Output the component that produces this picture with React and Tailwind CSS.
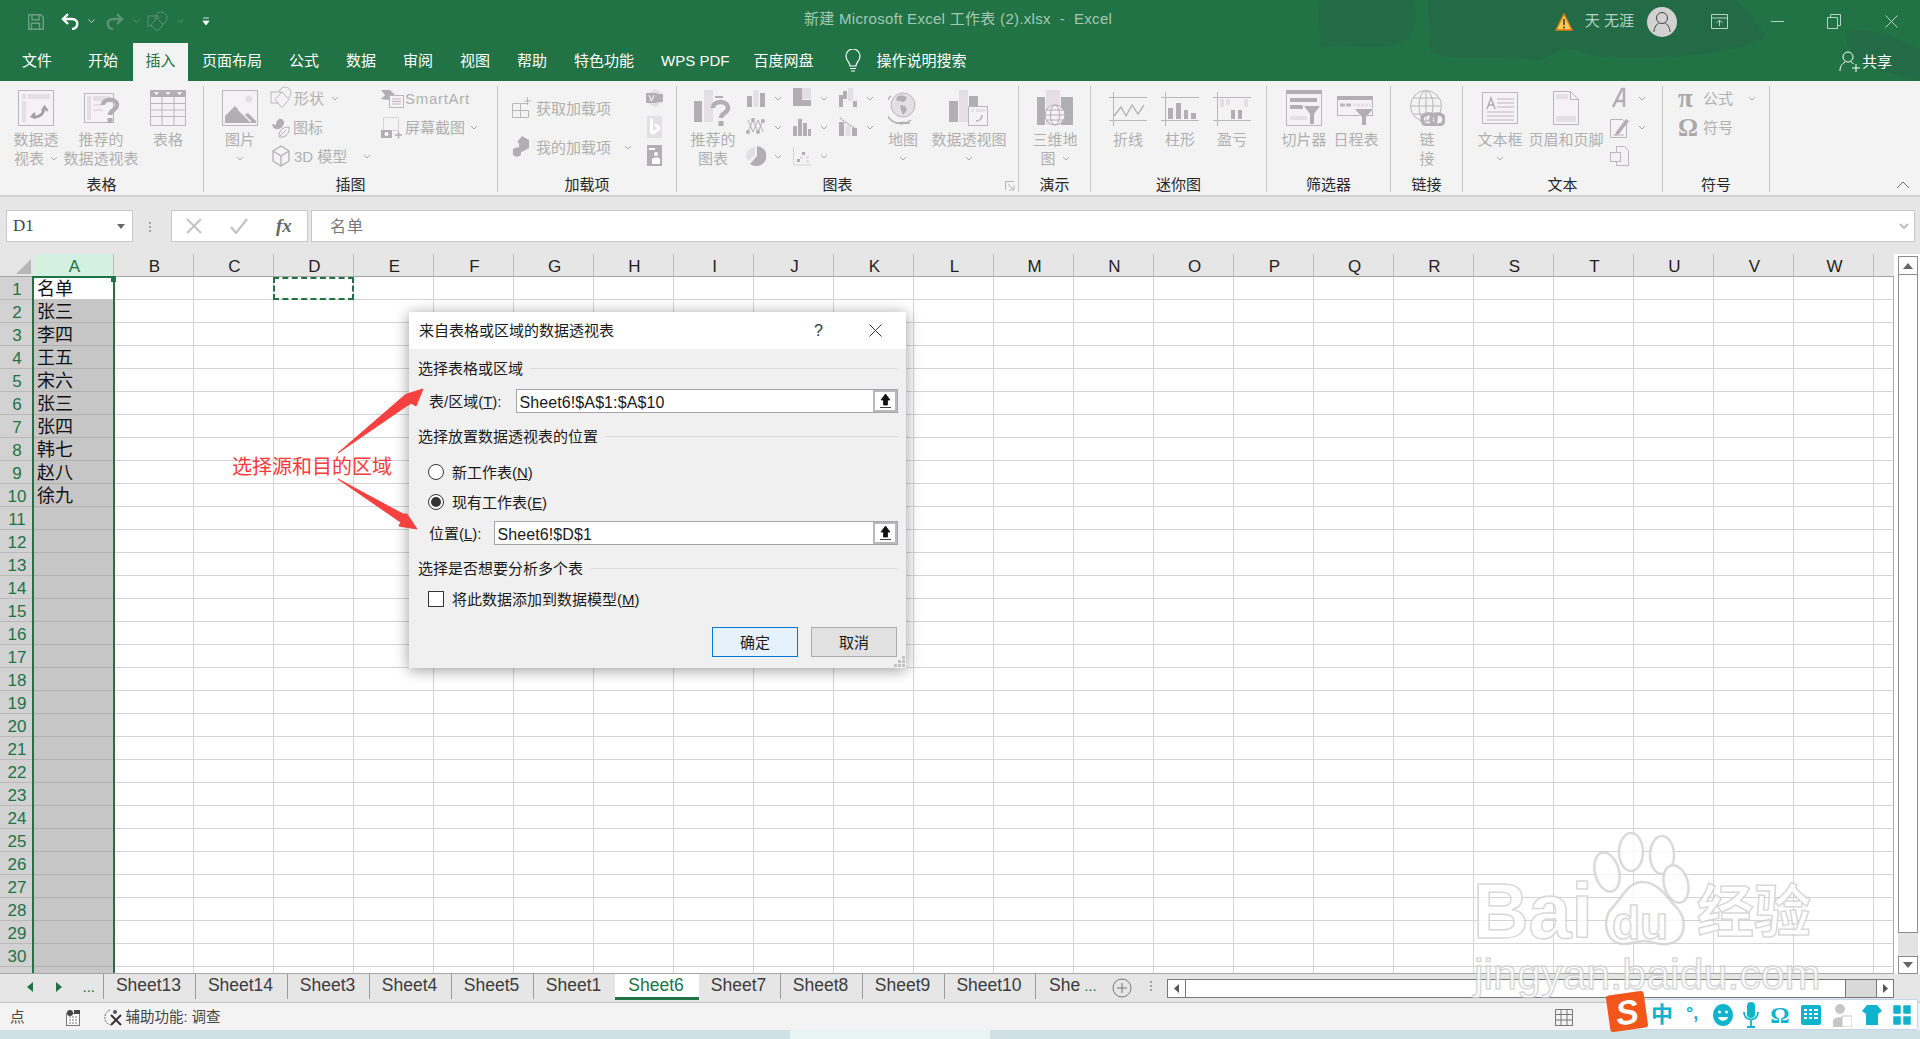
import React from "react";

const LETTERS = "ABCDEFGHIJKLMNOPQRSTUVW".split("");
const NAMES = ["名单", "张三", "李四", "王五", "宋六", "张三", "张四", "韩七", "赵八", "徐九"];
const ROWS = Array.from({ length: 31 }, (_, i) => i + 1);
const GRID = "grid grid-cols-[34px_repeat(23,80px)_20px]";

const D = "#b2afb2";
const L = "#e3dfe3";
const F = "#f5f2f5";
const S = "#bab7ba";

function Chev({ className = "" }) {
  return (
    <svg width="8" height="5" viewBox="0 0 8 5" className={"shrink-0 " + className}>
      <path d="M1 1l3 3 3-3" fill="none" stroke="#aaa" strokeWidth="1" />
    </svg>
  );
}

function Ico({ w = 36, h = 36, children }) {
  return (
    <svg width={w} height={h} viewBox={`0 0 ${w} ${h}`} className="shrink-0">
      {children}
    </svg>
  );
}

const Pivot = () => (
  <Ico>
    <rect x=".5" y=".5" width="35" height="35" fill={F} stroke={S} />
    <rect x="4" y="4" width="4" height="5" fill={L} />
    <rect x="10" y="4" width="22" height="5" fill={L} />
    <rect x="4" y="11" width="4" height="21" fill={L} />
    <path d="M14 26c5 2 10 0 12-6M24 21l2.500-4 3 4M17 23l-3 3.500 4 1.500" fill="none" stroke="#a3a0a3" strokeWidth="2.500" />
  </Ico>
);
const Recommend = () => (
  <Ico>
    <rect x="1.500" y="3.500" width="29" height="29" fill={F} stroke={S} />
    <rect x="4" y="6" width="4" height="24" fill={L} />
    <rect x="10" y="6" width="17" height="5" fill={L} />
    <rect x="10" y="14" width="10" height="2" fill={L} />
    <rect x="10" y="19" width="10" height="2" fill={L} />
    <path d="M20 15c0-7 14-7 14 0 0 5-7 5-7 10" fill="none" stroke={D} strokeWidth="4.500" />
    <rect x="24.500" y="28" width="5" height="5" fill={D} />
  </Ico>
);
const Table = () => (
  <Ico>
    <rect x=".5" y=".5" width="35" height="35" fill={F} stroke={S} />
    <rect x="0" y="0" width="36" height="7" fill={D} />
    <path d="M4 2h5l-2.500 3zM15.500 2h5L18 5zM27 2h5l-2.500 3z" fill="#fff" />
    <path d="M0 13.500h36M0 20h36M0 26.500h36M12 7v29M24 7v29" stroke={S} />
  </Ico>
);
const Picture = () => (
  <Ico>
    <rect x=".5" y=".5" width="35" height="35" fill={F} stroke={S} />
    <circle cx="27" cy="9" r="3.500" fill={L} />
    <path d="M3 33V26l10-10 9 9 4-2 8 8v2z" fill={D} />
    <path d="M16 19l13 13" stroke={F} strokeWidth="1.500" />
  </Ico>
);
const Shapes = () => (
  <Ico w={22} h={24}>
    <circle cx="15" cy="7" r="6" fill="none" stroke={S} />
    <rect x="1" y="6" width="11" height="11" fill={F} stroke={S} />
    <path d="M12 6l7 7.500-7 8-7-8z" fill={F} stroke={S} />
  </Ico>
);
const Bird = () => (
  <Ico w={22} h={24}>
    <path d="M2 9l4 1c0-5 4-8 7-5 2 2 1 5-1 7-3 3-7 3-9 0z" fill={D} />
    <path d="M9 22c0-6 3-10 10-10 1 6-3 11-10 10z" fill={F} stroke={D} />
    <path d="M10 21l6-6" stroke={D} />
  </Ico>
);
const Cube = () => (
  <Ico w={22} h={24}>
    <path d="M11 2l8 5v10l-8 5-8-5V7zM3 7l8 5 8-5M11 12v10" fill="none" stroke={D} strokeWidth="1.300" />
  </Ico>
);
const SmartArt = () => (
  <Ico w={24} h={24}>
    <path d="M0 4h9l5 5-6 5L0 13l4-4z" fill={D} />
    <rect x="8.500" y="9.500" width="14" height="12" fill={F} stroke={S} />
    <path d="M11 13h9M11 15.500h9M11 18h9" stroke={S} />
  </Ico>
);
const Shot = () => (
  <Ico w={24} h={24}>
    <rect x="2.500" y="2.500" width="15" height="13" fill="none" stroke={S} strokeDasharray="1 1" />
    <rect x="0" y="15" width="11" height="8" fill={D} />
    <circle cx="5.500" cy="19" r="2" fill="#fff" />
    <path d="M14 20h7M17.500 16.500v7" stroke={D} strokeWidth="1.500" />
  </Ico>
);
const GetAddin = () => (
  <Ico w={20} h={24}>
    <path d="M.5 7.500h8v7h-8zM.5 14.500h8v7h-8zM8.500 14.500h8v7h-8zM8.500 7.500h8" fill="none" stroke={S} />
    <path d="M12 5h7M15.500 1v8" stroke={S} />
  </Ico>
);
const MyAddin = () => (
  <Ico w={20} h={24}>
    <path d="M10 1l7 4v8l-7 4-3-2V8L5 7z" fill={D} />
    <path d="M5 12l4 2v6l-4 2-4-2v-6z" fill={D} />
  </Ico>
);
const Visio = () => (
  <Ico w={18} h={20}>
    <path d="M9 1l7 4v10l-7 4-7-4V5z" fill={L} />
    <rect x="0" y="5" width="11" height="10" fill={D} />
    <rect x="11" y="6" width="6" height="8" fill={D} />
    <path d="M3 7l2.500 6L8 7" fill="none" stroke="#fff" />
  </Ico>
);
const Bing = () => (
  <Ico w={18} h={22}>
    <rect x="1" y="0" width="15" height="22" fill={L} />
    <path d="M4 2l3 1v12l5-3-3-1-1-4 6 3v4l-7 5-3-2z" fill="#fff" />
  </Ico>
);
const People = () => (
  <Ico w={18} h={22}>
    <rect x="1" y="0" width="15" height="21" fill={D} />
    <rect x="3" y="3" width="6" height="2" fill="#fff" />
    <circle cx="10" cy="9" r="2" fill="#fff" />
    <path d="M6 19v-5c0-2 8-2 8 0v5z" fill="#fff" />
  </Ico>
);
const RecChart = () => (
  <Ico w={38} h={36}>
    <rect x="0" y="11" width="8" height="21" fill={D} />
    <rect x="10" y="0" width="9" height="32" fill={L} />
    <rect x="21" y="6" width="8" height="2" fill={D} />
    <path d="M19 18c0-8 15-8 15 0 0 5-7 5-7 10" fill="none" stroke={D} strokeWidth="4.500" />
    <rect x="24.500" y="31" width="5" height="5" fill={D} />
  </Ico>
);
const Bars = () => (
  <Ico w={20} h={22}>
    <rect x="1" y="9" width="5" height="11" fill={D} />
    <rect x="7.500" y="3" width="5" height="17" fill={L} />
    <rect x="14" y="6" width="5" height="14" fill={D} />
  </Ico>
);
const Tree = () => (
  <Ico w={20} h={22}>
    <rect x="1" y="1" width="9" height="18" fill={D} />
    <rect x="10" y="1" width="9" height="11" fill={L} />
    <rect x="10" y="13" width="9" height="6" fill={D} />
  </Ico>
);
const Water = () => (
  <Ico w={20} h={22}>
    <path d="M1 8h4v12H1z" fill={D} />
    <path d="M5 4h4v8H5z" fill={D} />
    <path d="M10 1h5v13h-5z" fill={L} />
    <path d="M15 14h4v6h-4z" fill={D} />
  </Ico>
);
const Stat = () => (
  <Ico w={22} h={22}>
    <path d="M3 4l5 12 5-12 5 12M3 16L8 4l5 12 5-12" fill="none" stroke={D} />
    <circle cx="3" cy="16" r="2" fill={D} />
    <circle cx="8" cy="4" r="2" fill={D} />
    <circle cx="13" cy="16" r="2" fill={D} />
    <circle cx="18" cy="5" r="2" fill={D} />
  </Ico>
);
const Histo = () => (
  <Ico w={20} h={22}>
    <rect x="1" y="10" width="4" height="10" fill={D} />
    <rect x="6" y="3" width="4" height="17" fill={D} />
    <rect x="11" y="7" width="4" height="13" fill={D} />
    <rect x="16" y="13" width="3" height="7" fill={D} />
  </Ico>
);
const Combo = () => (
  <Ico w={20} h={22}>
    <rect x="1" y="6" width="5" height="14" fill={D} />
    <rect x="7.500" y="10" width="5" height="10" fill={L} />
    <rect x="14" y="12" width="5" height="8" fill={D} />
    <path d="M2 2l8 6 8 5" fill="none" stroke={D} strokeDasharray="2 1" strokeWidth="1.500" />
  </Ico>
);
const Pie = () => (
  <Ico w={20} h={22}>
    <path d="M9 2a9 9 0 0 0-7 14l7-6z" fill={L} />
    <path d="M11 1a10 10 0 0 1-1 20 10 10 0 0 1-6-2l7-8z" fill={D} />
  </Ico>
);
const Scatter = () => (
  <Ico w={20} h={22}>
    <path d="M1.500 2v18h17" fill="none" stroke={S} strokeDasharray="1 1" />
    <rect x="5" y="14" width="3" height="3" fill={D} />
    <rect x="10" y="7" width="3" height="3" fill={D} />
    <rect x="14" y="11" width="3" height="3" fill={L} />
    <rect x="14" y="15" width="3" height="3" fill={L} />
    <rect x="8" y="11" width="3" height="3" fill={L} />
  </Ico>
);
const Globe = () => (
  <Ico w={30} h={36}>
    <path d="M3 6a15 15 0 0 0 20 24" fill="none" stroke={D} strokeWidth="1.500" />
    <circle cx="15" cy="15" r="12" fill={L} stroke={S} />
    <path d="M9 7c3-2 8-2 10 1l-3 4-5-1-3-1zM12 15l5 1 2 4-4 5-2-5z" fill={D} />
    <path d="M8 34c0-3 14-3 14 0z" fill={D} />
  </Ico>
);
const PivotChart = () => (
  <Ico w={40} h={36}>
    <rect x="0" y="11" width="9" height="21" fill={D} />
    <rect x="10" y="0" width="9" height="32" fill={L} />
    <rect x="20" y="6" width="9" height="14" fill={D} />
    <rect x="19.500" y="16.500" width="19" height="19" fill={F} stroke={S} />
    <rect x="22" y="19" width="3" height="3" fill={L} />
    <rect x="27" y="19" width="9" height="3" fill={L} />
    <path d="M27 31c3 0 6-2 6-6" fill="none" stroke={D} strokeWidth="1.500" />
  </Ico>
);
const Map3d = () => (
  <Ico>
    <rect x="0" y="7" width="8" height="28" fill={D} />
    <rect x="9" y="0" width="5" height="35" fill={L} />
    <rect x="14" y="0" width="9" height="35" fill={L} />
    <rect x="24" y="7" width="12" height="28" fill={D} />
    <circle cx="18" cy="25" r="10" fill={F} stroke={D} />
    <ellipse cx="18" cy="25" rx="4.500" ry="10" fill="none" stroke={D} />
    <path d="M8 25h20M9.500 20h17M9.500 30h17" stroke={D} />
  </Ico>
);
const Spark = ({ children }) => (
  <Ico w={38} h={34}>
    <path d="M0 5.500h38M0 28.500h38M4.500 0v34" stroke={S} />
    {children}
  </Ico>
);
const Slicer = () => (
  <Ico>
    <rect x=".5" y=".5" width="35" height="35" fill={F} stroke={S} />
    <rect x="0" y="0" width="36" height="4" fill={D} />
    <rect x="4" y="8" width="27" height="4" fill={D} />
    <rect x="4" y="15" width="13" height="4" fill={D} />
    <rect x="4" y="26" width="17" height="4" fill={L} />
    <path d="M16 15h19l-7 9v11h-5V24z" fill={F} />
    <path d="M18 16h16l-6 8v10h-4V24z" fill={D} />
  </Ico>
);
const Timeline = () => (
  <Ico w={38} h={36}>
    <rect x=".5" y="6.500" width="35" height="19" fill={F} stroke={S} />
    <rect x="0" y="6" width="36" height="4" fill={D} />
    <path d="M3 15h5M9 15h5" stroke={S} strokeWidth="3" />
    <path d="M16 15h18" stroke={L} strokeWidth="3" strokeDasharray="3 1" />
    <path d="M16 18h21l-8 9v9h-5v-9z" fill={F} />
    <path d="M18 19h18l-7 8v8h-4v-8z" fill={D} />
  </Ico>
);
const Link = () => (
  <Ico>
    <circle cx="17" cy="16" r="15.500" fill="none" stroke={S} />
    <ellipse cx="17" cy="16" rx="7" ry="15.500" fill="none" stroke={S} />
    <path d="M1 16h32M4 8h26M4 24h26M17 0v32" stroke={S} />
    <rect x="13" y="24" width="14" height="11" rx="5.500" fill="none" stroke={D} strokeWidth="3.500" />
    <rect x="22" y="24" width="13" height="11" rx="5.500" fill="none" stroke={D} strokeWidth="3.500" />
  </Ico>
);
const TextBox = () => (
  <Ico>
    <rect x=".5" y="2.500" width="35" height="31" fill={F} stroke={S} />
    <path d="M5 19l4-11 4 11M6.500 15h5" fill="none" stroke={D} strokeWidth="1.500" />
    <path d="M15 9h17M15 13h17M15 17h17M5 22h27M5 26h27M5 30h27" stroke={S} />
  </Ico>
);
const HeadFoot = () => (
  <Ico w={26} h={36}>
    <path d="M.5 1.500h17l8 8v25H.5z" fill={F} stroke={S} />
    <path d="M17.500 1.500v8h8" fill="none" stroke={S} />
    <rect x="3" y="4" width="12" height="5" fill={L} />
    <rect x="3" y="26" width="20" height="6" fill={L} />
  </Ico>
);
const WordArt = () => (
  <Ico w={20} h={22}>
    <path d="M3 20L12 2h2v18M5 14h9" fill="none" stroke={D} strokeWidth="2.500" />
  </Ico>
);
const SignLine = () => (
  <Ico w={20} h={22}>
    <path d="M.5 3.500h12l4 4v14H.5z" fill={F} stroke={S} />
    <path d="M6 16L16 3l3 2L9 18l-4 2z" fill={D} />
    <path d="M3 19h11" stroke={S} />
  </Ico>
);
const ObjectIco = () => (
  <Ico w={20} h={22}>
    <path d="M6.500 1.500h8l4 4v15h-12z" fill={F} stroke={S} />
    <rect x=".5" y="7.500" width="10" height="9" fill={F} stroke={S} />
  </Ico>
);

function Group({ label, className, labelClass = "", children, extra }) {
  return (
    <div className={"relative flex h-[106px] shrink-0 flex-col border-r border-[#c6c6c6] " + className}>
      <div className="flex h-[93px] items-start whitespace-nowrap text-[#b0b0b0]">{children}</div>
      <div className={"flex flex-1 items-center justify-center text-[15px] leading-none text-[#262626] " + labelClass}>{label}</div>
      {extra}
    </div>
  );
}

function Big({ className = "", icon, lines, drop }) {
  return (
    <div className={"flex shrink-0 flex-col items-center text-[15px] leading-[19px] " + className}>
      <div className="mt-[4px] flex h-[36px] items-end justify-center">{icon}</div>
      <div className="mt-[4px] flex flex-col items-center">
        {lines.map((l, i) => (
          <div key={i} className="flex h-[19px] items-center gap-[6px]">
            {l}
            {drop && i === lines.length - 1 && <Chev />}
          </div>
        ))}
      </div>
    </div>
  );
}

function BigDropBelow({ className = "", icon, lines }) {
  return (
    <div className={"flex shrink-0 flex-col items-center text-[15px] leading-[19px] " + className}>
      <div className="mt-[4px] flex h-[36px] items-end justify-center">{icon}</div>
      <div className="mt-[4px] flex flex-col items-center">
        {lines.map((l) => (
          <div key={l} className="flex h-[19px] items-center">
            {l}
          </div>
        ))}
        <div className="flex h-[19px] items-center">
          <Chev />
        </div>
      </div>
    </div>
  );
}

function Small({ icon, text, gap = "gap-[2px]", chev, className = "" }) {
  return (
    <div className={"flex h-[24px] items-center text-[15px] leading-none " + gap + " " + className}>
      {icon}
      {text && <span>{text}</span>}
      {chev}
    </div>
  );
}

function ChartCol({ items }) {
  return (
    <div className="flex w-[46px] shrink-0 flex-col gap-[5px]">
      {items.map((It, i) => (
        <div key={i} className="flex h-[24px] items-center gap-[8px]">
          <span className="flex w-[21px] justify-center">
            <It />
          </span>
          <Chev />
        </div>
      ))}
    </div>
  );
}

function Ribbon() {
  return (
    <div className="flex h-[116px] items-start border-b-2 border-[#d2d2d2] bg-[#f3f3f3] pt-[5px]">
      <Group label="表格" className="w-[204px]">
        <Big className="ml-[7px] w-[58px]" icon={<Pivot />} lines={["数据透", "视表"]} drop />
        <Big className="w-[72px]" icon={<Recommend />} lines={["推荐的", "数据透视表"]} />
        <Big className="w-[62px]" icon={<Table />} lines={["表格"]} />
      </Group>
      <Group label="插图" className="w-[294px]">
        <BigDropBelow className="ml-[14px] w-[44px]" icon={<Picture />} lines={["图片"]} />
        <div className="ml-[8px] flex w-[111px] shrink-0 flex-col gap-[5px]">
          <Small icon={<Shapes />} text="形状" chev={<Chev className="ml-[5px]" />} />
          <Small icon={<Bird />} text="图标" gap="gap-[1px]" />
          <Small icon={<Cube />} text="3D 模型" chev={<Chev className="ml-[14px]" />} />
        </div>
        <div className="flex flex-col gap-[5px]">
          <Small icon={<SmartArt />} text={<span className="tracking-[0.7px]">SmartArt</span>} gap="gap-0" />
          <Small icon={<Shot />} text="屏幕截图" gap="gap-0" chev={<Chev className="ml-[5px]" />} />
        </div>
      </Group>
      <Group label="加载项" className="w-[179px]">
        <div className="flex w-[148px] shrink-0 flex-col gap-[15px] pl-[14px] pt-[10px]">
          <Small icon={<GetAddin />} text="获取加载项" gap="gap-[4px]" />
          <Small icon={<MyAddin />} text="我的加载项" gap="gap-[4px]" chev={<Chev className="ml-[9px]" />} />
        </div>
        <div className="flex flex-col gap-[5px]">
          <Small icon={<Visio />} />
          <Small icon={<Bing />} />
          <Small icon={<People />} />
        </div>
      </Group>
      <Group
        label="图表"
        className="w-[342px]"
        labelClass="pr-[20px]"
        extra={
          <svg width="10" height="10" viewBox="0 0 10 10" className="absolute bottom-[1px] right-[3px]">
            <path d="M.5 9V.5H9M3 3l5.500 5.500M4.500 9H9V4.500" fill="none" stroke="#b5b5b5" />
          </svg>
        }
      >
        <Big className="ml-[11px] w-[50px]" icon={<RecChart />} lines={["推荐的", "图表"]} />
        <div className="ml-[7px]">
          <ChartCol items={[Bars, Stat, Pie]} />
        </div>
        <ChartCol items={[Tree, Histo, Scatter]} />
        <div className="flex w-[46px] shrink-0 flex-col gap-[5px]">
          {[Water, Combo].map((It, i) => (
            <div key={i} className="flex h-[24px] items-center gap-[8px]">
              <span className="flex w-[21px] justify-center">
                <It />
              </span>
              <Chev />
            </div>
          ))}
        </div>
        <BigDropBelow className="w-[40px]" icon={<Globe />} lines={["地图"]} />
        <BigDropBelow className="ml-[1px] w-[90px]" icon={<PivotChart />} lines={["数据透视图"]} />
      </Group>
      <Group label="演示" className="w-[72px]">
        <Big className="w-[72px]" icon={<Map3d />} lines={["三维地", "图"]} drop />
      </Group>
      <Group label="迷你图" className="w-[176px]">
        <Big
          className="ml-[11px] w-[52px]"
          icon={
            <Spark>
              <path d="M5 24l7-9 5 9 6-11 6 9 6-9" fill="none" stroke={D} strokeWidth="1.300" />
            </Spark>
          }
          lines={["折线"]}
        />
        <Big
          className="w-[52px]"
          icon={
            <Spark>
              <path d="M7 16h5v11H7zM15 11h5v16h-5zM23 18h4v9h-4zM30 21h5v6h-5z" fill={D} />
            </Spark>
          }
          lines={["柱形"]}
        />
        <Big
          className="w-[52px]"
          icon={
            <Spark>
              <path d="M7 7h4v8H7zM13 7h4v6h-4zM31 7h4v8h-4z" fill={L} />
              <path d="M18 18h4v9h-4zM25 18h4v9h-4z" fill={D} />
            </Spark>
          }
          lines={["盈亏"]}
        />
      </Group>
      <Group label="筛选器" className="w-[124px]">
        <Big className="ml-[11px] w-[52px]" icon={<Slicer />} lines={["切片器"]} />
        <Big className="w-[52px]" icon={<Timeline />} lines={["日程表"]} />
      </Group>
      <Group label="链接" className="w-[72px]">
        <Big className="w-[72px]" icon={<Link />} lines={["链", "接"]} />
      </Group>
      <Group label="文本" className="w-[200px]">
        <BigDropBelow className="ml-[7px] w-[60px]" icon={<TextBox />} lines={["文本框"]} />
        <Big className="w-[72px]" icon={<HeadFoot />} lines={["页眉和页脚"]} />
        <div className="ml-[8px] flex flex-col gap-[5px]">
          <Small icon={<WordArt />} chev={<Chev className="ml-[6px]" />} />
          <Small icon={<SignLine />} chev={<Chev className="ml-[6px]" />} />
          <Small icon={<ObjectIco />} />
        </div>
      </Group>
      <Group label="符号" className="w-[107px]">
        <div className="flex flex-col gap-[5px] pl-[15px]">
          <Small
            icon={<span className="w-[23px] font-['Liberation_Serif',serif] text-[27px] font-bold text-[#a9a9a9]">π</span>}
            text="公式"
            chev={<Chev className="ml-[13px]" />}
          />
          <Small
            icon={<span className="w-[23px] font-['Liberation_Serif',serif] text-[25px] font-bold text-[#a9a9a9]">Ω</span>}
            text="符号"
          />
        </div>
      </Group>
      <div className="flex h-[106px] flex-1 items-end justify-end pb-[3px] pr-[10px]">
        <svg width="14" height="8" viewBox="0 0 14 8">
          <path d="M1 7l6-6 6 6" fill="none" stroke="#666" />
        </svg>
      </div>
    </div>
  );
}

function TitleBar() {
  const tabs = ["页面布局", "公式", "数据", "审阅", "视图", "帮助", "特色功能"];
  return (
    <div className="relative h-[81px] overflow-hidden bg-[#217346]">
      <svg className="absolute left-0 top-0" width="1920" height="81" viewBox="0 0 1920 81">
        <path
          d="M1320 0c-5 20 2 35 0 48 20-8 60 7 85-8 13-10 13-30 7-40zM1428 0l2 50c10 12 50 5 110 10 20-10 30-15 50-5 60 7 150 0 176-20-21-25-26-35-36-35zM1850 30c20-2 50 8 70 20v31l-40-11c-30-10-40-30-30-40z"
          fill="#236a47"
        />
      </svg>
      <div className="relative flex h-[43px] items-center">
        <div className="flex items-center">
          <svg width="16" height="16" viewBox="0 0 16 16" className="ml-[28px]">
            <path d="M.7.7h12l2.600 2.600v12H.7zM4 .7v5h7v-5M3.500 15.300v-6h8v6" fill="none" stroke="#6f9e84" strokeWidth="1.400" />
          </svg>
          <svg width="19" height="17" viewBox="0 0 19 17" className="ml-[17px]">
            <path d="M7 1L2 6l5 5M2 6h9c7 0 7 9 0 10" fill="none" stroke="#fff" strokeWidth="2.400" />
          </svg>
          <Caret className="ml-[8px]" color="#bcd5c7" />
          <svg width="19" height="17" viewBox="0 0 19 17" className="ml-[10px]">
            <path d="M12 1l5 5-5 5M17 6H8c-7 0-7 9 0 10" fill="none" stroke="#5d9274" strokeWidth="2.400" />
          </svg>
          <Caret className="ml-[9px]" color="#5d9274" />
          <svg width="21" height="21" viewBox="0 0 21 21" className="ml-[7px]">
            <circle cx="14" cy="7" r="6" fill="none" stroke="#5d9274" />
            <rect x="1" y="5" width="10" height="10" fill="none" stroke="#5d9274" />
            <path d="M10 7l6 7-6 6-6-6z" fill="#217346" stroke="#5d9274" />
          </svg>
          <Caret className="ml-[9px]" color="#5d9274" />
          <svg width="8" height="9" viewBox="0 0 8 9" className="ml-[18px]">
            <path d="M1 1h6M1 4h6L4 8z" fill="#fff" stroke="#fff" strokeWidth=".8" />
          </svg>
        </div>
        <div className="absolute left-[804px] top-[9px] whitespace-pre text-[15px] leading-[20px] tracking-[0.3px] text-[#a5c9b4]">
          新建 Microsoft Excel 工作表 (2).xlsx  -  Excel
        </div>
        <div className="ml-auto flex items-center">
          <svg width="18" height="18" viewBox="0 0 18 18">
            <path d="M9 1l8 16H1z" fill="#f5c95a" stroke="#e07a12" strokeWidth="1.400" />
            <path d="M9 6v6M9 13.500v2" stroke="#333" strokeWidth="1.500" />
          </svg>
          <span className="ml-[12px] whitespace-pre text-[15px] text-[#b7d4c3]">天 无涯</span>
          <div className="ml-[13px] flex h-[30px] w-[30px] items-center justify-center rounded-full bg-[#d2d2d2]">
            <svg width="18" height="22" viewBox="0 0 18 22">
              <circle cx="9" cy="7" r="5.500" fill="none" stroke="#444" />
              <path d="M1 21c0-5 3-8 5-9M17 21c0-5-3-8-5-9" fill="none" stroke="#444" />
            </svg>
          </div>
          <svg width="17" height="15" viewBox="0 0 17 15" className="ml-[34px]">
            <path d="M.5.5h16v14H.5zM.5 4h16M8.500 12V6M5.500 9l3-3 3 3" fill="none" stroke="#b7d4c3" />
          </svg>
          <svg width="13" height="1" viewBox="0 0 13 1" className="ml-[43px]">
            <path d="M0 .5h13" stroke="#b7d4c3" />
          </svg>
          <svg width="14" height="15" viewBox="0 0 14 15" className="ml-[43px]">
            <path d="M.5 3.500h10v11H.5zM3.500 3.500v-3h10v11h-3" fill="none" stroke="#b7d4c3" />
          </svg>
          <svg width="13" height="13" viewBox="0 0 13 13" className="ml-[44px] mr-[22px]">
            <path d="M.5.5l12 12M12.500.5l-12 12" stroke="#b7d4c3" />
          </svg>
        </div>
      </div>
      <div className="relative flex h-[38px] items-stretch text-[15px] leading-none text-white">
        <div className="ml-[21px] flex w-[66px] items-center pb-[3px] pl-px">文件</div>
        <div className="flex w-[46px] items-center pb-[3px] pl-px">开始</div>
        <div className="flex w-[55px] items-center justify-center bg-[#f3f3f3] pb-[3px] text-[#217346]">插入</div>
        <div className="ml-[14px] flex items-center gap-[27px] pb-[3px]">
          {tabs.map((t) => (
            <span key={t} className="whitespace-nowrap">
              {t}
            </span>
          ))}
          <span className="-mr-[3px] whitespace-nowrap">WPS PDF</span>
          <span className="whitespace-nowrap">百度网盘</span>
        </div>
        <div className="ml-[32px] flex items-center pb-[3px]">
          <svg width="16" height="24" viewBox="0 0 16 24">
            <path d="M5 17c0-4-4-5-4-10a7 7 0 0 1 14 0c0 5-4 6-4 10zM5 19.500h6M6 22h4" fill="none" stroke="#fff" strokeWidth="1.200" />
          </svg>
          <span className="ml-[15px]">操作说明搜索</span>
        </div>
        <div className="ml-auto mr-[28px] flex items-center pb-[2px]">
          <svg width="22" height="22" viewBox="0 0 22 22">
            <circle cx="9" cy="7" r="5" fill="none" stroke="#fff" />
            <path d="M1 21c0-5 2-7 5-9M12 12c1 .5 2 1 2.500 2M13 18h8M17 14v8" fill="none" stroke="#fff" />
          </svg>
          <span className="ml-[1px]">共享</span>
        </div>
      </div>
    </div>
  );
}

function Caret({ className, color }) {
  return (
    <svg width="7" height="5" viewBox="0 0 7 5" className={className}>
      <path d="M.5.5l3 3 3-3" fill="none" stroke={color} />
    </svg>
  );
}

function FormulaBar() {
  return (
    <div className="flex h-[57px] items-start bg-[#e6e6e6] pt-[13px] text-[#444]">
      <div className="ml-[6px] flex h-[32px] w-[127px] items-center border border-[#c8c8c8] bg-white pl-[6px] pr-[7px]">
        <span className="font-['Liberation_Serif',serif] text-[17px]">D1</span>
        <svg width="8" height="5" viewBox="0 0 8 5" className="ml-auto">
          <path d="M0 0h8L4 5z" fill="#666" />
        </svg>
      </div>
      <div className="ml-[16px] mt-[12px] flex h-[10px] w-[22px] flex-col gap-[2px]">
        <span className="h-[2px] w-[2px] bg-[#a3a3a3]" />
        <span className="h-[2px] w-[2px] bg-[#a3a3a3]" />
        <span className="h-[2px] w-[2px] bg-[#a3a3a3]" />
      </div>
      <div className="flex h-[32px] w-[137px] items-center border border-[#c8c8c8] bg-white pl-[14px]">
        <svg width="16" height="16" viewBox="0 0 16 16">
          <path d="M1 1l14 14M15 1L1 15" stroke="#c2c2c2" strokeWidth="1.800" />
        </svg>
        <svg width="18" height="16" viewBox="0 0 18 16" className="ml-[28px]">
          <path d="M1 9l5 6L17 1" fill="none" stroke="#c2c2c2" strokeWidth="2.200" />
        </svg>
        <span className="ml-[28px] font-['Liberation_Serif',serif] text-[19px] font-bold italic text-[#666]">fx</span>
      </div>
      <div className="ml-[3px] flex h-[32px] w-[1604px] items-center border border-[#c8c8c8] bg-white pl-[18px] pr-[5px]">
        <span className="pt-px text-[16px] tracking-[1px] text-[#777]">名单</span>
        <svg width="10" height="7" viewBox="0 0 10 7" className="ml-auto">
          <path d="M1 1l4 4 4-4" fill="none" stroke="#bdbdbd" strokeWidth="2" />
        </svg>
      </div>
    </div>
  );
}

function Sheet() {
  return (
    <div className="flex h-[720px]">
      <div className="relative w-[1894px] shrink-0 overflow-hidden border-b border-[#a6a6a6]">
        <div className={GRID + " h-[23px] bg-[#e6e6e6] text-[17px] leading-none text-[#1f1f1f]"}>
          <div className="flex items-center justify-end border-b border-[#a3a3a3] pr-[3px] pt-[2px]">
            <svg width="15" height="15" viewBox="0 0 15 15">
              <path d="M15 0v15H0z" fill="#b7b7b7" />
            </svg>
          </div>
          {LETTERS.map((l) => (
            <div
              key={l}
              className={
                "flex items-center justify-center border-b border-r border-b-[#a3a3a3] border-r-[#bdbdbd] pl-[2px] pt-[2px] " +
                (l === "A" ? "bg-[#d3f0e0] text-[#217346]" : "")
              }
            >
              {l}
            </div>
          ))}
          <div className="border-b border-[#a3a3a3]" />
        </div>
        {ROWS.map((r) => (
          <div key={r} className={GRID + " h-[23px]"}>
            <div className="flex items-center justify-center border-b border-[#b9b9b9] bg-[#d2d2d2] pt-[2px] text-[17px] leading-none text-[#217346]">
              {r}
            </div>
            <div
              className={
                "flex items-center border-b pl-[3px] pt-[2px] text-[18px] leading-none text-[#111] " +
                (r === 1 ? "border-[#c6c6c6] bg-white" : "border-[#b0b0b0] bg-[#c6c6c6]")
              }
            >
              {NAMES[r - 1]}
            </div>
            {LETTERS.slice(1).map((l) => (
              <div key={l} className="border-b border-r border-[#d4d4d4] bg-white" />
            ))}
            <div className="border-b border-r border-b-[#d4d4d4] border-r-[#a6a6a6] bg-white" />
          </div>
        ))}
        <div className="absolute bottom-0 left-[32px] top-[22px] w-[83px] border-x-2 border-t-2 border-[#217346]" />
        <div className="absolute left-[111px] top-[22px] h-[6px] w-[5px] bg-[#217346]" />
        <div className="absolute left-[273px] top-[23px] h-[23px] w-[81px] border-2 border-dashed border-[#217346]" />
      </div>
      <div className="ml-[4px] mt-[2px] flex w-[20px] flex-col">
        <div className="flex h-[19px] items-center justify-center border border-[#8c8c8c] bg-white">
          <svg width="10" height="6" viewBox="0 0 10 6">
            <path d="M5 0l5 6H0z" fill="#666" />
          </svg>
        </div>
        <div className="h-[658px] border-x border-b border-[#8c8c8c] bg-white" />
        <div className="flex-1 bg-[#e3e3e3]" />
        <div className="flex h-[18px] items-center justify-center border border-[#8c8c8c] bg-white">
          <svg width="10" height="6" viewBox="0 0 10 6">
            <path d="M5 6l5-6H0z" fill="#666" />
          </svg>
        </div>
      </div>
    </div>
  );
}

function SheetTabs() {
  const before = [
    ["Sheet13", "w-[92px]"],
    ["Sheet14", "w-[92px]"],
    ["Sheet3", "w-[82px]"],
    ["Sheet4", "w-[82px]"],
    ["Sheet5", "w-[82px]"],
    ["Sheet1", "w-[82px]"],
  ];
  const after = [
    ["Sheet7", "w-[82px]"],
    ["Sheet8", "w-[82px]"],
    ["Sheet9", "w-[82px]"],
    ["Sheet10", "w-[91px]"],
  ];
  const Tab = ({ t, w }) => (
    <div className={"flex h-[25px] items-center justify-center border-r border-[#9c9c9c] pb-[2px] pr-[2px] " + w}>{t}</div>
  );
  return (
    <div className="flex h-[29px] items-start border-b border-[#c4c4c4] bg-[#e6e6e6] text-[17.500px] leading-none text-[#3c3c3c]">
      <div className="flex h-[25px] w-[104px] items-center justify-end border-r border-[#9c9c9c] pr-[8px]">
        <svg width="6" height="10" viewBox="0 0 6 10" className="mr-[23px]">
          <path d="M6 0v10L0 5z" fill="#217346" />
        </svg>
        <svg width="6" height="10" viewBox="0 0 6 10" className="mr-[20px]">
          <path d="M0 0v10l6-5z" fill="#217346" />
        </svg>
        <span className="text-[15px] text-[#217346]">...</span>
      </div>
      {before.map(([t, w]) => (
        <Tab key={t} t={t} w={w} />
      ))}
      <div className="-ml-[1px] flex h-[26px] w-[84px] items-center justify-center border-b-[3px] border-[#217346] bg-white pr-[2px] text-[#217346]">
        Sheet6
      </div>
      {after.map(([t, w]) => (
        <Tab key={t} t={t} w={w} />
      ))}
      <div className="flex h-[25px] w-[76px] items-center pb-[2px] pl-[13px]">
        She <span className="ml-[4px] text-[15px] text-[#217346]">...</span>
      </div>
      <svg width="20" height="20" viewBox="0 0 20 20" className="mt-[4px]">
        <circle cx="10" cy="10" r="9" fill="none" stroke="#777" />
        <path d="M10 5v10M5 10h10" stroke="#777" />
      </svg>
      <div className="ml-[18px] mt-[7px] flex flex-col gap-[2px]">
        <span className="h-[2px] w-[2px] bg-[#a3a3a3]" />
        <span className="h-[2px] w-[2px] bg-[#a3a3a3]" />
        <span className="h-[2px] w-[2px] bg-[#a3a3a3]" />
      </div>
      <div className="ml-[15px] mt-[5px] flex h-[19px] w-[727px] border-y border-[#777]">
        <div className="flex w-[19px] items-center justify-center border-x border-[#777] bg-white">
          <svg width="5" height="9" viewBox="0 0 5 9">
            <path d="M5 0v9L0 4.500z" fill="#555" />
          </svg>
        </div>
        <div className="w-[660px] border-r border-[#777] bg-white" />
        <div className="w-[30px] bg-[#d9d9d9]" />
        <div className="flex w-[18px] items-center justify-center border-x border-[#777] bg-white">
          <svg width="5" height="9" viewBox="0 0 5 9">
            <path d="M0 0v9l5-4.500z" fill="#555" />
          </svg>
        </div>
      </div>
    </div>
  );
}

function StatusBar() {
  return (
    <div className="flex h-[27px] items-center bg-[#f3f3f3] pt-[2px] text-[14.500px] leading-none text-[#444]">
      <span className="ml-[10px]">点</span>
      <svg width="14" height="16" viewBox="0 0 14 16" className="ml-[41px]">
        <rect x=".5" y="3.500" width="13" height="12" fill="#fff" stroke="#777" />
        <path d="M3 7h8M3 10h8M3 13h8" stroke="#777" strokeDasharray="2 1" />
        <circle cx="4" cy="3" r="3" fill="#444" />
        <rect x="8" y="0" width="6" height="4" fill="#444" />
      </svg>
      <svg width="20" height="20" viewBox="0 0 20 20" className="ml-[23px]">
        <path d="M7 2a8 8 0 0 0 0 15" fill="none" stroke="#666" strokeDasharray="2 1" />
        <path d="M8 7l10 10M18 7L8 17" stroke="#333" strokeWidth="2" />
        <circle cx="12" cy="4" r="2" fill="#555" />
      </svg>
      <span className="ml-[3px]">辅助功能: 调查</span>
      <svg width="18" height="17" viewBox="0 0 18 17" className="ml-[1334px]">
        <path d="M.5.5h17v16H.5zM.5 5.500h17M.5 11h17M6 .5v16M12 .5v16" fill="none" stroke="#777" />
      </svg>
    </div>
  );
}

function SectionHead({ text }) {
  return (
    <div className="flex h-[20px] items-center gap-[7px]">
      <span className="whitespace-nowrap">{text}</span>
      <span className="h-px flex-1 bg-[#dadada]" />
    </div>
  );
}

function RefInput({ value }) {
  return (
    <div className="flex h-[24px] flex-1 border border-[#a4a4ac] bg-white">
      <span className="flex flex-1 items-center pl-[3px] pt-[4px] text-[16px] leading-none tracking-[0.1px]">{value}</span>
      <div className="flex w-[24px] items-center justify-center border-[2px] border-[#b9b9b9] bg-white">
        <svg width="11" height="15" viewBox="0 0 11 15">
          <path d="M5.500 0L10 6H7.500v5h-4V6H1zM0 13.500h11" fill="#111" stroke="#111" strokeWidth=".8" />
        </svg>
      </div>
    </div>
  );
}

function Dialog() {
  return (
    <div className="absolute left-[409px] top-[312px] flex h-[356px] w-[497px] flex-col bg-[#f0f0f0] text-[15px] leading-none text-[#1a1a1a] shadow-[0_2px_14px_rgba(0,0,0,0.4)]">
      <div className="flex h-[37px] items-center bg-white pl-[10px]">
        <span>来自表格或区域的数据透视表</span>
        <span className="ml-auto text-[16px] text-[#333]">?</span>
        <svg width="13" height="13" viewBox="0 0 13 13" className="ml-[46px] mr-[24px]">
          <path d="M.5.5l12 12M12.500.5l-12 12" stroke="#333" />
        </svg>
      </div>
      <div className="relative flex-1 pl-[9px] pr-[8px] pt-[9px]">
        <SectionHead text="选择表格或区域" />
        <div className="mt-[11px] flex items-center pl-[11px]">
          <span className="w-[86.500px] shrink-0">
            表/区域(<u>T</u>):
          </span>
          <RefInput value="Sheet6!$A$1:$A$10" />
        </div>
        <div className="mt-[13px]">
          <SectionHead text="选择放置数据透视表的位置" />
        </div>
        <div className="mt-[14px] flex h-[24px] items-center pl-[10px]">
          <span className="h-[16px] w-[16px] rounded-full border border-[#333] bg-white" />
          <span className="ml-[8px]">
            新工作表(<u>N</u>)
          </span>
        </div>
        <div className="mt-[6px] flex h-[24px] items-center pl-[10px]">
          <span className="flex h-[16px] w-[16px] items-center justify-center rounded-full border border-[#333] bg-white">
            <span className="h-[10px] w-[10px] rounded-full bg-[#333]" />
          </span>
          <span className="ml-[8px]">
            现有工作表(<u>E</u>)
          </span>
        </div>
        <div className="mt-[7px] flex items-center pl-[11px]">
          <span className="w-[64.500px] shrink-0">
            位置(<u>L</u>):
          </span>
          <RefInput value="Sheet6!$D$1" />
        </div>
        <div className="mt-[13px]">
          <SectionHead text="选择是否想要分析多个表" />
        </div>
        <div className="mt-[9px] flex h-[24px] items-center pl-[10px]">
          <span className="h-[16px] w-[16px] border border-[#333] bg-white" />
          <span className="ml-[8px]">
            将此数据添加到数据模型(<u>M</u>)
          </span>
        </div>
        <div className="mt-[16px] flex justify-end gap-[13px] pr-px">
          <button className="flex h-[30px] w-[86px] items-center justify-center border border-[#0078d7] bg-[#e5f1fb]">确定</button>
          <button className="flex h-[30px] w-[86px] items-center justify-center border border-[#adadad] bg-[#e1e1e1]">取消</button>
        </div>
        <svg width="11" height="11" viewBox="0 0 11 11" className="absolute bottom-[1px] right-[1px]">
          <path d="M8 0h3v3H8zM4 4h3v3H4zM8 4h3v3H8zM0 8h3v3H0zM4 8h3v3H4zM8 8h3v3H8z" fill="#c4c4c4" />
        </svg>
      </div>
    </div>
  );
}

function Annotation() {
  return (
    <>
      <svg className="absolute left-0 top-0" width="1920" height="1039" viewBox="0 0 1920 1039">
        <path d="M338 453l67-58 2-1 16-5-7 17-5-3-2 2-1 0z" fill="#f5413f" stroke="#f5413f" strokeWidth="1" strokeLinejoin="round" />
        <path d="M338 479l65 35 4 0 10 15-18-3 2-4-2-1z" fill="#f5413f" stroke="#f5413f" strokeWidth="1" strokeLinejoin="round" />
      </svg>
      <div className="absolute left-[232px] top-[455px] whitespace-nowrap text-[20px] leading-[24px] text-[#f53c3c]">选择源和目的区域</div>
    </>
  );
}

function Watermark() {
  const stroke = "absolute whitespace-nowrap leading-none text-white opacity-80 [-webkit-text-stroke:1.500px_#cfcfcf]";
  return (
    <>
      <svg className="absolute left-[1590px] top-[832px] opacity-80" width="110" height="118" viewBox="0 0 110 118">
        <g fill="#fff" stroke="#d2d2d2" strokeWidth="2.500">
          <ellipse cx="41" cy="20" rx="12" ry="19" />
          <ellipse cx="72" cy="23" rx="12" ry="19" />
          <ellipse cx="17" cy="40" rx="12" ry="20" transform="rotate(-15 17 40)" />
          <ellipse cx="86" cy="52" rx="12" ry="19" transform="rotate(-15 86 52)" />
          <path d="M52 50c-14 0-20 16-30 26-10 10-8 34 10 36 8 1 12-3 22-3 10 0 14 5 24 3 18-3 20-24 9-36-10-10-18-26-35-26z" />
        </g>
      </svg>
      <div className={stroke + " left-[1473px] top-[873px] text-[77px] font-bold"}>Bai</div>
      <div className={stroke + " left-[1612px] top-[900px] text-[46px] font-bold"}>du</div>
      <div className={stroke + " left-[1697px] top-[884px] text-[57px] font-bold"}>经验</div>
      <div className={stroke + " left-[1474px] top-[953px] text-[43px]"}>jingyan.baidu.com</div>
    </>
  );
}

function ImeBar() {
  const c = "#0fb3cb";
  return (
    <div className="absolute left-[1610px] top-[993px] flex h-[37px] w-[308px] items-end">
      <div className="flex h-[31px] flex-1 items-center rounded-[2px] border border-[#c4d4ea] bg-white pl-[40px] text-[22px] font-bold leading-none text-[#0fb3cb]">
        <span>中</span>
        <span className="-mt-[4px] ml-[13px] text-[18px]">°,</span>
        <svg width="20" height="22" viewBox="0 0 20 22" className="ml-[15px]">
          <ellipse cx="10" cy="11" rx="10" ry="11" fill={c} />
          <circle cx="6.500" cy="8" r="1.500" fill="#fff" />
          <circle cx="13.500" cy="8" r="1.500" fill="#fff" />
          <path d="M5 13h10c-1 5-9 5-10 0z" fill="#fff" />
        </svg>
        <svg width="16" height="26" viewBox="0 0 16 26" className="ml-[10px]">
          <rect x="4" y="0" width="8" height="16" rx="4" fill={c} />
          <path d="M1 10c0 10 14 10 14 0M8 18v6M4 25h8" fill="none" stroke={c} strokeWidth="1.800" />
        </svg>
        <span className="ml-[11px] font-['Liberation_Serif',serif] text-[24px]">Ω</span>
        <svg width="20" height="20" viewBox="0 0 20 20" className="ml-[12px]">
          <rect width="20" height="20" rx="2" fill={c} />
          <path d="M3 5h3M8 5h3M13 5h4M3 9h3M8 9h3M13 9h4M3 13h3M8 13h3M13 13h4" stroke="#fff" strokeWidth="2" />
        </svg>
        <svg width="20" height="24" viewBox="0 0 20 24" className="ml-[11px]">
          <circle cx="8" cy="6" r="5" fill="#c6c6c6" />
          <path d="M1 24v-6c0-5 14-5 14 0v6z" fill="#c6c6c6" />
          <rect x="10" y="13" width="10" height="11" fill="#fff" stroke="#c6c6c6" />
        </svg>
        <svg width="20" height="20" viewBox="0 0 20 20" className="ml-[10px]">
          <path d="M5 0h10l5 6-4 3v11H4V9L0 6z" fill={c} />
        </svg>
        <svg width="18" height="20" viewBox="0 0 18 20" className="ml-[11px]">
          <path d="M1 1h6v7H1zM11 1h6v7h-6zM1 12h6v7H1zM11 12h6v7h-6z" fill={c} stroke={c} strokeLinejoin="round" strokeWidth="1.500" />
        </svg>
      </div>
      <div className="absolute -left-[2px] bottom-0 flex h-[37px] w-[38px] -rotate-[8deg] items-center justify-center rounded-[3px] bg-[#f3561a] text-[34px] font-bold italic leading-none text-white">
        S
      </div>
    </div>
  );
}

export default function App() {
  return (
    <div className="relative h-[1039px] w-[1920px] overflow-hidden bg-white font-['Liberation_Sans','Noto_Sans_CJK_SC',sans-serif]">
      <TitleBar />
      <Ribbon />
      <FormulaBar />
      <Sheet />
      <SheetTabs />
      <StatusBar />
      <div className="flex h-[9px]">
        <div className="w-[790px] bg-[#cfe1e5]" />
        <div className="w-[200px] bg-[#e8f3f4]" />
        <div className="flex-1 bg-[#cfe1e5]" />
      </div>
      <Dialog />
      <Annotation />
      <Watermark />
      <ImeBar />
    </div>
  );
}
